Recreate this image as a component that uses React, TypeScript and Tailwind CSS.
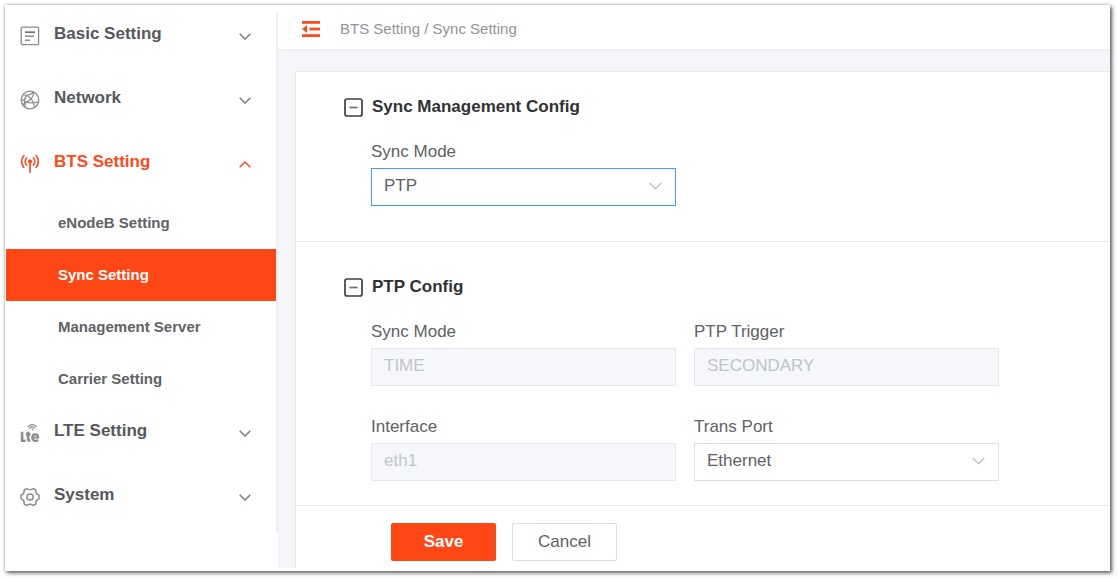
import { useState } from 'react';
import type { ReactNode } from 'react';

const IconForm = () => (
  <svg viewBox="0 0 20 20" className="size-5" fill="none" stroke="#8b8d92" strokeWidth="1.3" aria-hidden="true">
    <rect x="1.2" y="1.2" width="17.4" height="17.4" rx="1.2" />
    <path d="M5 6.2h10" stroke="#6f7278" strokeWidth="1.7" />
    <path d="M5 10.3h9M5 14.2h5" strokeWidth="1.5" />
  </svg>
);

const IconGlobe = () => (
  <svg viewBox="0 0 20 20" className="size-5" fill="none" stroke="#8b8d92" strokeWidth="1.3" aria-hidden="true">
    <circle cx="10" cy="10" r="8.8" />
    <path d="M3.400 4.500C7 6.500 10 5.500 13.500 2M7.500 5.800C11 8 13.800 12 14.600 17.200M13.500 2C14.500 6.500 9 12 2.500 14.400M1.500 9c4 3.500 10 4.800 17 2.800M6.500 5.500C4.300 8.500 3.700 12 5.500 17" />
  </svg>
);

const IconTower = () => (
  <svg viewBox="0 0 20 20" className="size-5" fill="none" stroke="#ff4a1c" strokeWidth="1.7" strokeLinecap="round" aria-hidden="true">
    <path d="M3.800 1.700a9 9 0 0 0 0 11.600M16.200 1.700a9 9 0 0 1 0 11.600M6.600 4a5.200 5.200 0 0 0 0 7M13.400 4a5.200 5.200 0 0 1 0 7" />
    <path d="M10 8v10" />
    <circle cx="10" cy="7.500" r="1.700" fill="#ff4a1c" strokeWidth="1" />
  </svg>
);

const IconLte = () => (
  <svg viewBox="0 0 20 20" className="size-5" fill="none" stroke="#8b8d92" strokeWidth="1.200" aria-hidden="true">
    <path d="M7.800 4.200c1.800-3.400 6.600-3.600 8.900-.3M9.400 5.600c1.400-2.200 4.300-2.300 5.900-.2" />
    <circle cx="12.500" cy="6.400" r="1" fill="#8b8d92" stroke="none" />
    <path d="M2.100 8.800v8.900h3.500M8.100 8.800v7.400c0 1.100.6 1.500 2.200 1.400M5.800 11.400h4.600" strokeWidth="2.600" />
    <path d="M12.300 14.500h5.900c0-4.200-5.900-4.200-5.900 0 0 3.800 4 3.800 5.900 2.500" strokeWidth="2.200" />
  </svg>
);

const IconGear = () => (
  <svg viewBox="0 0 20 20" className="size-5" fill="none" stroke="#8b8d92" strokeWidth="1.500" strokeLinejoin="round" aria-hidden="true">
    <path d="M6.800 1.500 Q10 3.900 13.200 1.500 L15.800 3 Q15.500 6.900 19 8.300 V11.700 Q15.500 13.100 15.800 17 L13.200 18.500 Q10 16.100 6.800 18.500 L4.200 17 Q4.500 13.100 1 11.700 V8.300 Q4.500 6.900 4.200 3 Z" />
    <circle cx="10" cy="10" r="3.100" />
  </svg>
);

const IconFold = () => (
  <svg viewBox="0 0 18 16" className="h-4 w-[18px]" fill="#ff4a1c" aria-hidden="true">
    <rect x="0" y="0" width="18" height="2.800" />
    <rect x="7.500" y="6.600" width="10.500" height="2.800" />
    <rect x="0" y="13.200" width="18" height="2.800" />
    <path d="M0 8l5-4v8z" />
  </svg>
);

const IconMinusBox = () => (
  <svg viewBox="0 0 19 19" className="size-[19px] shrink-0" fill="none" aria-hidden="true">
    <rect x="1" y="1" width="17" height="17" rx="2" stroke="#3c3f44" strokeWidth="1.700" />
    <path d="M5.500 9.500h8" stroke="#6c6f74" strokeWidth="1.700" />
  </svg>
);

const Chevron = ({ className }: { className: string }) => (
  <svg viewBox="0 0 12 7" className={className} fill="none" stroke="currentColor" strokeWidth="1.500" aria-hidden="true">
    <path d="M.7.700 6 6 11.300.700" />
  </svg>
);

function MenuItem({ icon, label, open = false }: { icon: ReactNode; label: string; open?: boolean }) {
  return (
    <button
      type="button"
      aria-expanded={open}
      className={
        'flex h-[52px] w-full items-center pr-[25px] pl-[15px] text-left text-[17px] font-bold ' +
        (open ? 'text-[#ff4a1c]' : 'text-[#55585d]')
      }
    >
      <span className="pt-[3px]">{icon}</span>
      <span className="flex-1 pl-[14px]">{label}</span>
      <span className={'pt-1 ' + (open ? '' : 'text-[#7b7e83]')}>
        <Chevron className={'h-[7px] w-3 ' + (open ? 'rotate-180' : '')} />
      </span>
    </button>
  );
}

const subItems = ['eNodeB Setting', 'Sync Setting', 'Management Server', 'Carrier Setting'];

function Sidebar() {
  return (
    <nav className="mt-2 w-[273px] shrink-0 self-start border-r-2 border-[#eeeff1] bg-white pb-[11px]">
      <ul className="-mt-[5px] flex flex-col gap-3">
        <li><MenuItem icon={<IconForm />} label="Basic Setting" /></li>
        <li><MenuItem icon={<IconGlobe />} label="Network" /></li>
        <li className="-mb-3">
          <MenuItem icon={<IconTower />} label="BTS Setting" open />
          <ul className="pt-[9px]">
            {subItems.map((name) => (
              <li key={name}>
                <a
                  href="#"
                  className={
                    'ml-px flex h-[52px] items-center pl-[52px] text-[15px] font-bold ' +
                    (name === 'Sync Setting' ? 'bg-[#ff4716] text-white' : 'text-[#606266]')
                  }
                >
                  {name}
                </a>
              </li>
            ))}
          </ul>
        </li>
        <li><MenuItem icon={<IconLte />} label="LTE Setting" /></li>
        <li><MenuItem icon={<IconGear />} label="System" /></li>
      </ul>
    </nav>
  );
}

function Field({ id, label, children }: { id: string; label: string; children: ReactNode }) {
  return (
    <div className="flex max-w-[305px] flex-1 flex-col gap-1">
      <label htmlFor={id} className="text-[17px] leading-6 text-[#606266]">{label}</label>
      {children}
    </div>
  );
}

function ReadOnlyField({ id, label, value }: { id: string; label: string; value: string }) {
  return (
    <Field id={id} label={label}>
      <input
        id={id}
        defaultValue={value}
        disabled
        className="h-[38px] w-full border border-[#e4e7ed] bg-[#f5f7fa] px-3 pb-[3px] text-[17px] text-[#c0c4cc]"
      />
    </Field>
  );
}

function SelectField({ id, label, options, active = false }: { id: string; label: string; options: string[]; active?: boolean }) {
  const [value, setValue] = useState(options[0]);
  return (
    <Field id={id} label={label}>
      <div className="relative">
        <select
          id={id}
          value={value}
          onChange={(e) => setValue(e.target.value)}
          className={
            'h-[38px] w-full appearance-none border bg-white px-3 pb-[3px] text-[17px] text-[#606266] outline-none ' +
            (active ? 'border-[#409eff]' : 'border-[#dcdfe6]')
          }
        >
          {options.map((o) => <option key={o}>{o}</option>)}
        </select>
        <Chevron className="pointer-events-none absolute top-3.5 right-3.5 h-2 w-[13px] text-[#c0c4cc]" />
      </div>
    </Field>
  );
}

function SectionTitle({ children }: { children: ReactNode }) {
  return (
    <h2 className="text-[17px] leading-6 font-bold text-[#303133]">
      <button type="button" aria-expanded="true" className="flex items-center gap-[9px]">
        <IconMinusBox />
        {children}
      </button>
    </h2>
  );
}

export default function App() {
  return (
    <div className="flex min-h-screen bg-white pt-[5px] pr-[9px] pb-[9px] pl-[5px] font-['Liberation_Sans',Arial,sans-serif]">
      <div className="flex flex-1 bg-white shadow-[2px_2px_4px_0px_rgba(0,0,0,0.6),0px_0px_3px_0px_rgba(0,0,0,0.3)]">
        <Sidebar />
        <div className="flex min-w-0 flex-1 flex-col pb-[3px]">
          <header className="mt-2 flex h-[38px] items-center gap-5 border-b-2 border-[#eeeff1] pb-1 pl-6">
            <button type="button" aria-label="Collapse menu"><IconFold /></button>
            <p className="text-[15px] text-[#909399]">BTS Setting / Sync Setting</p>
          </header>
          <main className="flex flex-1 flex-col bg-[#f5f6fa] pt-5 pl-[17px]">
            <form className="flex flex-1 flex-col border-t border-l border-[#e9eaee] bg-white" onSubmit={(e) => e.preventDefault()}>
              <section className="border-b border-[#e6e7ea] pt-[23px] pb-[35px] pl-12">
                <SectionTitle>Sync Management Config</SectionTitle>
                <div className="mt-[21px] ml-[27px] flex gap-[18px]">
                  <SelectField id="sync-mode" label="Sync Mode" options={['PTP', 'GNSS', 'FREE RUNNING']} active />
                </div>
              </section>
              <section className="border-b border-[#e6e7ea] pt-[33px] pb-6 pl-12">
                <SectionTitle>PTP Config</SectionTitle>
                <div className="mt-[21px] ml-[27px] flex flex-col gap-[29px]">
                  <div className="flex gap-[18px]">
                    <ReadOnlyField id="ptp-sync-mode" label="Sync Mode" value="TIME" />
                    <ReadOnlyField id="ptp-trigger" label="PTP Trigger" value="SECONDARY" />
                  </div>
                  <div className="flex gap-[18px]">
                    <ReadOnlyField id="interface" label="Interface" value="eth1" />
                    <SelectField id="trans-port" label="Trans Port" options={['Ethernet', 'UDP']} />
                  </div>
                </div>
              </section>
              <div className="flex gap-4 pt-[17px] pl-[95px]">
                <button type="submit" className="h-[38px] w-[105px] rounded-xs bg-[#ff4716] text-[17px] font-bold text-white">Save</button>
                <button type="button" className="h-[38px] w-[105px] rounded-xs border border-[#dcdfe6] bg-white text-[17px] text-[#606266]">Cancel</button>
              </div>
            </form>
          </main>
        </div>
      </div>
    </div>
  );
}
